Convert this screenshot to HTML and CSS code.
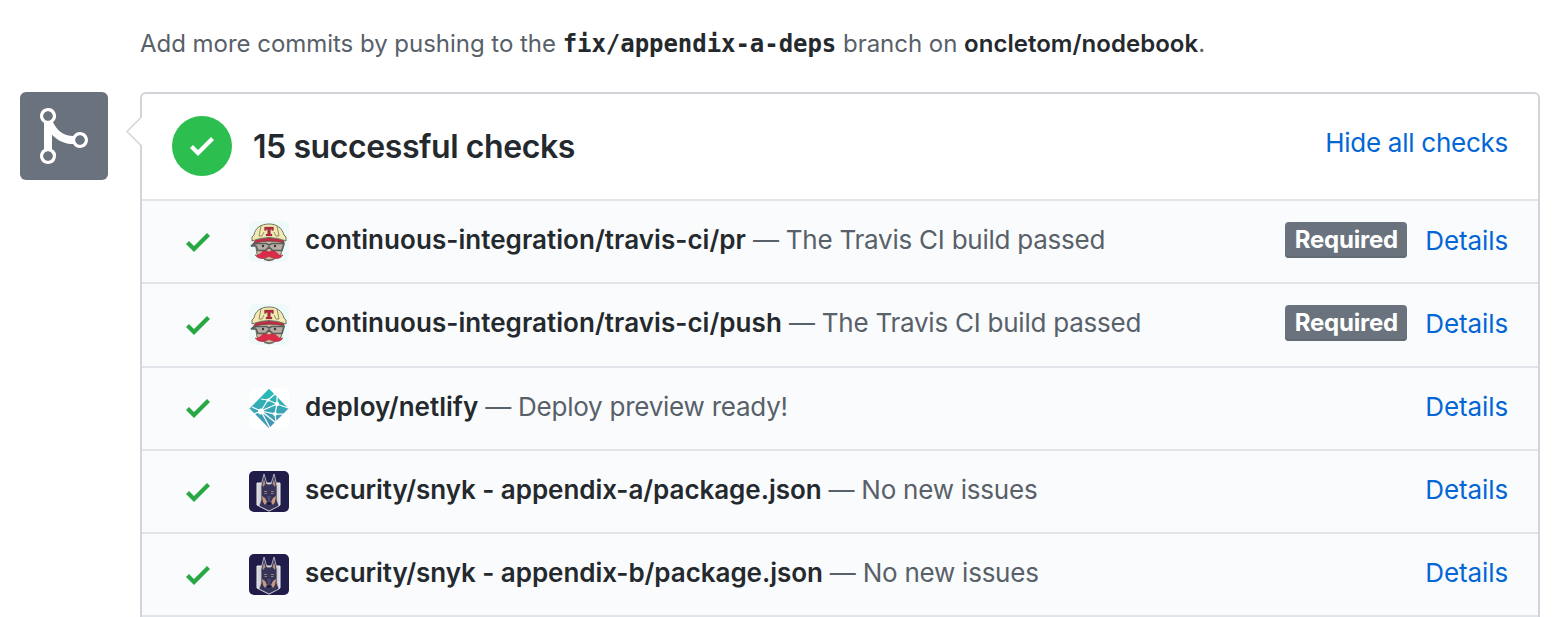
FILE: index.html
```html
<!DOCTYPE html>
<html lang="en">
<head>
<meta charset="utf-8">
<title>Merge checks</title>
<link rel="stylesheet" href="styles.css">
</head>
<body>
<svg class="defs" aria-hidden="true">
  <symbol id="check" viewBox="0 0 12 16"><path d="M12 5l-8 8-4-4 1.500-1.500L4 10l6.500-6.500L12 5z"/></symbol>
  <symbol id="travis" viewBox="0 0 40 41">
    <rect width="40" height="41" rx="6" fill="#eef9f9"/>
    <path d="M6 20L8 33Q12 38 20 39Q29 38 32 33L35 20Z" fill="#d9b79c" stroke="#55504e" stroke-width=".8"/>
    <path d="M2 25L7 19Q20 15 34 19L35 22Q20 18 7 22Z" fill="#ca2940" stroke="#51484a" stroke-width=".6"/>
    <path d="M5 14C6 7 12 3 20 3S33 7 35 14L37 16V20Q20 13 3 20V16Z" fill="#f3eab0" stroke="#65645b" stroke-width=".9"/>
    <path d="M12 5L10 15M28 5L30 15M15 11L13 15H10M25 11L27 15H30" fill="none" stroke="#77745e" stroke-width=".8"/>
    <path d="M15.500 6H24.500V9.500H22.800V8.500H21.400V13H23V15H17V13H18.600V8.500H17.200V9.500H15.500Z" fill="#b62640" stroke="#65443e" stroke-width=".3"/>
    <path d="M2 25L7 22.500H17.500L20 24L22.500 22.500H35L33 29.500H23.500L20 26L16.500 29.500H9L7 25Z" fill="#b9aba0" stroke="#566061" stroke-width="1.700"/>
    <circle cx="14" cy="25" r="1.200" fill="#303740"/><circle cx="26" cy="25" r="1.200" fill="#303740"/>
    <path d="M20 31Q15 28 12 32Q9 35 6 34Q10 39 16 37L20 35.500L24 37Q31 39 34 34Q30 35 28 32Q24 28 20 31Z" fill="#dc2b49" stroke="#8b3440" stroke-width=".5"/>
    <path d="M15 38.500Q20 41 25 38.500" fill="none" stroke="#655c58"/>
  </symbol>
  <symbol id="snyk" viewBox="0 0 40 41">
    <rect width="40" height="41" rx="5" fill="#211d4b"/>
    <path d="M8 12H31V34L20 40L8 34Z" fill="#d5d5d8" stroke="#eeeef1"/>
    <path d="M12 15L15 3L18 13H22L25 3L28 15V29L30 35L20 40L10 35L12 29Z" fill="#353458" stroke="#cacad5" stroke-width=".8"/>
    <path d="M13.500 14L15 8L16.500 13L14 16ZM26.500 14L25 8L23.500 13L26 16Z" fill="#b78c7d"/>
    <path d="M13 25L16 27L18 31L16 34L14 31ZM27 25L24 27L22 31L24 34L26 31Z" fill="#c99980"/>
    <path d="M15 20.500H18M25 20.500H22M15.500 22.500H18M24.500 22.500H22" stroke="#b99180" stroke-width=".8"/>
    <path d="M18 25H22L21 30L23 32L20 35L17 32L19 30Z" fill="#4c4968"/><ellipse cx="20" cy="32.500" rx="2" ry="1.500" fill="#151839"/>
  </symbol>
  <linearGradient id="teal" x2="0" y2="1"><stop stop-color="#24bfb5"/><stop offset="1" stop-color="#4a91b5"/></linearGradient>
  <symbol id="netlify" viewBox="0 0 40 41">
    <rect width="40" height="41" rx="6" fill="#fff"/>
    <path d="M20 .8L39.500 20.500L20 40.200L.5 20.500Z" fill="url(#teal)"/>
    <path d="M12 11L19 12L28 16L39 20M26 6L19 12L12 23L21 40M28 9L28 16L26 26L27 34M3 19L12 23L26 26L35 26M12 23L28 16M12 23L5 26M12 23L26 34" fill="none" stroke="#fff" stroke-width="1.250"/>
    <g fill="#fff"><circle cx="12" cy="23.500" r="3"/><circle cx="28" cy="16" r="2.200"/><circle cx="26" cy="26" r="2"/><circle cx="19" cy="12" r="1.600"/></g>
  </symbol>
</svg>
<main class="page">
  <p class="hint">Add more commits by pushing to the <strong class="branch">fix/appendix-a-deps</strong> branch on <strong class="repo">oncletom/nodebook</strong>.</p>
  <div class="merge">
    <div class="merge-badge"><svg width="48" height="64" viewBox="0 0 12 16" fill="#fff"><path d="M10 7c-.73 0-1.380.41-1.730 1.020V8C7.220 7.980 6 7.640 5.140 6.980c-.75-.58-1.500-1.610-1.890-2.440A1.993 1.993 0 0 0 2 .99C.89.99 0 1.890 0 3a2 2 0 0 0 1 1.720v6.560c-.59.35-1 .99-1 1.720 0 1.110.89 2 2 2a1.993 1.993 0 0 0 1-3.720V7.670c.67.7 1.440 1.270 2.300 1.690.86.42 2.030.63 2.970.64v-.02c.36.61 1 1.020 1.730 1.020 1.110 0 2-.89 2-2 0-1.110-.89-2-2-2zm-6.800 6c0 .66-.55 1.200-1.200 1.200-.65 0-1.200-.55-1.200-1.200 0-.65.55-1.200 1.200-1.200.65 0 1.200.55 1.200 1.200zM2 4.200C1.340 4.200.8 3.650.8 3c0-.65.55-1.200 1.200-1.200.65 0 1.200.55 1.200 1.200 0 .65-.55 1.200-1.200 1.200zm8 6c-.66 0-1.200-.55-1.200-1.200 0-.65.55-1.200 1.200-1.200.65 0 1.200.55 1.200 1.200 0 .65-.55 1.200-1.200 1.200z"/></svg></div>
    <section class="box">
      <svg class="caret" width="16" height="30" viewBox="0 0 16 30"><path d="M16 0L1 14.500L16 29Z" fill="#fff"/><path d="M15 .5L1 14.500L15 28.500" fill="none" stroke="#d1d5da" stroke-width="1.500"/></svg>
      <header class="summary">
        <span class="disc"><svg class="check"><use href="#check"/></svg></span>
        <h1 class="title">15 successful checks</h1>
        <a class="link toggle">Hide all checks</a>
      </header>
      <div class="row"><svg class="check"><use href="#check"/></svg><svg class="avatar"><use href="#travis"/></svg><strong class="name ci">continuous-integration/travis-ci/pr</strong><span class="desc">— The Travis CI build passed</span><span class="required">Required</span><a class="link">Details</a></div>
      <div class="row"><svg class="check"><use href="#check"/></svg><svg class="avatar"><use href="#travis"/></svg><strong class="name ci">continuous-integration/travis-ci/push</strong><span class="desc">— The Travis CI build passed</span><span class="required">Required</span><a class="link">Details</a></div>
      <div class="row"><svg class="check"><use href="#check"/></svg><svg class="avatar"><use href="#netlify"/></svg><strong class="name">deploy/netlify</strong><span class="desc">— Deploy preview ready!</span><a class="link">Details</a></div>
      <div class="row"><svg class="check"><use href="#check"/></svg><svg class="avatar"><use href="#snyk"/></svg><strong class="name security">security/snyk - appendix-a/package.json</strong><span class="desc">— No new issues</span><a class="link">Details</a></div>
      <div class="row"><svg class="check"><use href="#check"/></svg><svg class="avatar"><use href="#snyk"/></svg><strong class="name security">security/snyk - appendix-b/package.json</strong><span class="desc">— No new issues</span><a class="link">Details</a></div>
      <div class="row"></div>
    </section>
  </div>
</main>
</body>
</html>
```

FILE: styles.css
```css
* { box-sizing: border-box; }
body { margin: 0; background: #fff; font-family: Inter, "Liberation Sans", sans-serif; color: #24292e; }
.defs { position: absolute; width: 0; height: 0; }
.page { height: 617px; overflow: hidden; padding: 0 14px 0 20px; }
.hint { margin: 0; height: 92px; padding: 28px 0 0 120px; font-size: 24px; line-height: 32px; letter-spacing: -.03px; color: #586069; white-space: nowrap; }
.hint strong { color: #24292e; font-weight: 600; }
.hint .branch { font-family: "DejaVu Sans Mono", monospace; font-size: 24px; font-weight: 700; letter-spacing: -.05px; }
.hint .repo { letter-spacing: .03px; }
.merge { display: flex; gap: 32px; align-items: flex-start; }
.merge-badge { width: 88px; height: 88px; padding: 12px 20px; border-radius: 6px; background: #6a737d; }
.merge-badge svg { display: block; }
.box { position: relative; flex: 1; border: 2px solid #d1d5da; border-radius: 6px; background: #fff; }
.caret { position: absolute; left: -16px; top: 23px; }
.summary { display: flex; align-items: flex-start; height: 105px; padding: 22px 30px; }
.disc { width: 60px; height: 60px; padding: 14px 18px; border-radius: 50%; background: #2cbe4e; }
.check { display: block; flex: none; width: 24px; height: 32px; fill: #28a745; }
.disc .check { fill: #fff; }
.title { margin: 11px 0 0 21px; font-size: 32px; line-height: 40px; font-weight: 600; letter-spacing: -.42px; white-space: nowrap; }
.link { margin-left: auto; margin-bottom: 3px; font-size: 26px; line-height: 32px; letter-spacing: -.12px; color: #0366d6; }
.toggle { margin-top: 11px; letter-spacing: -.26px; }
.row { display: flex; align-items: center; height: 83.300px; padding: 0 30px 0 44px; border-top: 2px solid #e1e4e8; background: #fafbfc; font-size: 26px; line-height: 36px; white-space: nowrap; }
.avatar { flex: none; width: 40px; height: 41px; margin: 0 16px 0 39px; }
.name { margin-bottom: 3px; font-weight: 600; }
.ci { letter-spacing: .05px; }
.security { letter-spacing: -.05px; }
.desc { margin: 0 0 3px 7px; letter-spacing: -.24px; color: #586069; }
.required { height: 36px; width: 122px; margin: 0 18px 4px auto; border-radius: 4px; background: #6a737d; box-shadow: inset 0 -2px 0 #626a74; color: #fff; font-size: 24px; font-weight: 700; letter-spacing: -.2px; text-align: center; }
.required + .link { margin-left: 0; margin-bottom: 2px; }
```
